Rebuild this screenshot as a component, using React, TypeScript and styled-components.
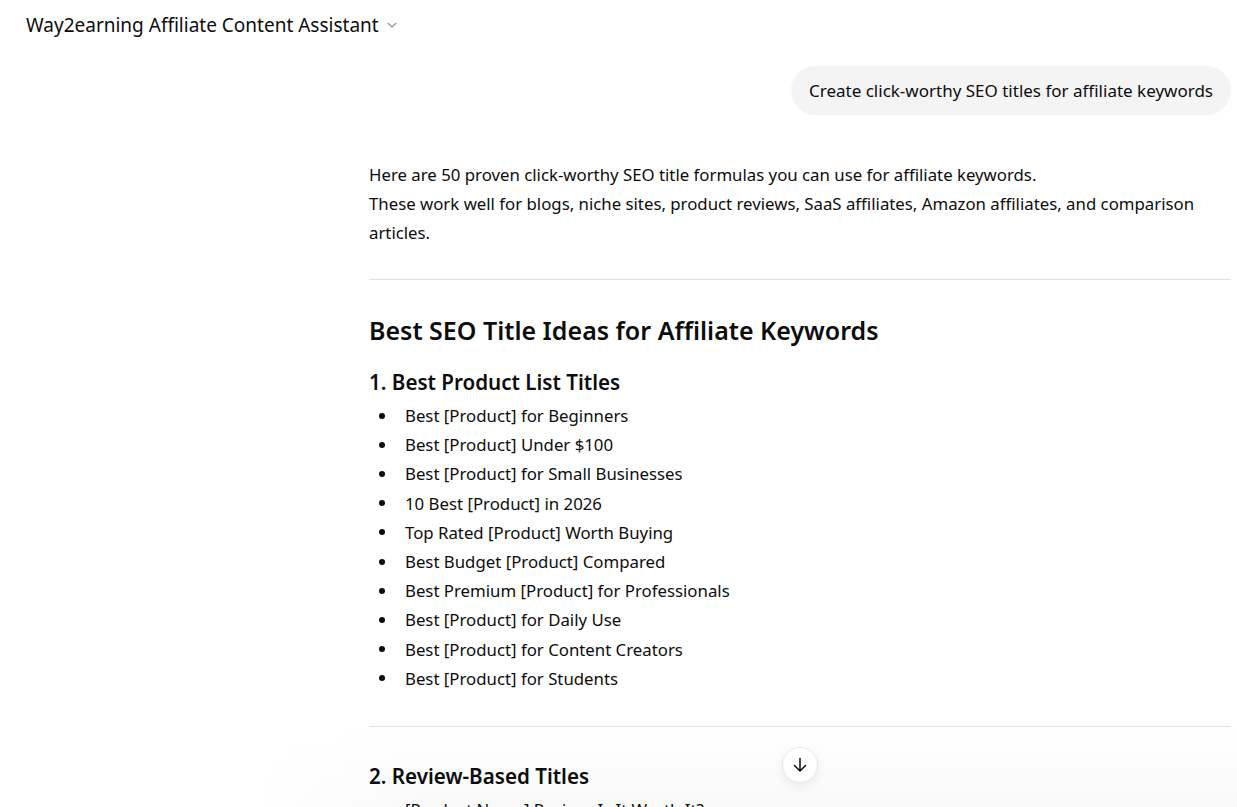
import styled, { createGlobalStyle } from 'styled-components';

const GlobalStyle = createGlobalStyle`
  html, body {
    margin: 0;
    padding: 0;
    background: #ffffff;
    overflow: hidden;
  }

  body {
    font-family: 'Noto Sans', 'Open Sans', sans-serif;
    color: #0d0d0d;
  }
`;

interface Section {
  title: string;
  items: string[];
}

const sections: Section[] = [
  {
    title: '1. Best Product List Titles',
    items: [
      'Best [Product] for Beginners',
      'Best [Product] Under $100',
      'Best [Product] for Small Businesses',
      '10 Best [Product] in 2026',
      'Top Rated [Product] Worth Buying',
      'Best Budget [Product] Compared',
      'Best Premium [Product] for Professionals',
      'Best [Product] for Daily Use',
      'Best [Product] for Content Creators',
      'Best [Product] for Students',
    ],
  },
  {
    title: '2. Review-Based Titles',
    items: ['[Product Name] Review: Is It Worth It?', '[Product Name] Review: Pros, Cons & Verdict'],
  },
];

const App = () => {
  return (
    <Page>
      <GlobalStyle />
      <Header>
        <AssistantName>Way2earning Affiliate Content Assistant</AssistantName>
        <svg width="14" height="14" viewBox="0 0 16 16" fill="none">
          <path d="M3.5 6L8 10.5L12.5 6" stroke="#8f8f8f" strokeWidth="1.3" strokeLinecap="round" strokeLinejoin="round" />
        </svg>
      </Header>

      <Thread>
        <UserRow>
          <UserBubble>Create click-worthy SEO titles for affiliate keywords</UserBubble>
        </UserRow>

        <Answer>
          <Paragraph>
            Here are 50 proven click-worthy SEO title formulas you can use for affiliate keywords.
            <br />
            These work well for blogs, niche sites, product reviews, SaaS affiliates, Amazon affiliates, and comparison
            articles.
          </Paragraph>

          <Divider />

          <MainHeading>Best SEO Title Ideas for Affiliate Keywords</MainHeading>

          {sections.map((section, i) => (
            <SectionBlock key={section.title}>
              {i > 0 && <Divider $gap={33} />}
              <SubHeading $first={i === 0}>{section.title}</SubHeading>
              <BulletList>
                {section.items.map((item) => (
                  <li key={item}>{item}</li>
                ))}
              </BulletList>
            </SectionBlock>
          ))}
        </Answer>
      </Thread>

      <BottomFade />
      <ScrollButton aria-label="Scroll to bottom">
        <svg width="20" height="20" viewBox="0 0 20 20" fill="none">
          <path d="M10 3.5V16M4.5 10.5L10 16L15.5 10.5" stroke="#0d0d0d" strokeWidth="1.5" strokeLinecap="round" strokeLinejoin="round" />
        </svg>
      </ScrollButton>
    </Page>
  );
};

const Page = styled.div`
  position: relative;
  width: 1237px;
  height: 807px;
  overflow: hidden;
  background: #ffffff;
`;

const Header = styled.div`
  display: flex;
  align-items: center;
  gap: 6px;
  height: 50px;
  padding-left: 26px;
`;

const AssistantName = styled.span`
  font-size: 19px;
  color: #0d0d0d;
`;

const Thread = styled.div`
  display: flex;
  flex-direction: column;
  padding: 16px 6px 0 369px;
`;

const UserRow = styled.div`
  display: flex;
  justify-content: flex-end;
`;

const UserBubble = styled.div`
  padding: 12px 18px;
  background: #f4f4f4;
  border-radius: 25px;
  font-size: 17px;
  line-height: 25px;
  color: #0d0d0d;
`;

const Answer = styled.div`
  margin-top: 45px;
`;

const Paragraph = styled.p`
  margin: 0;
  font-size: 16.8px;
  line-height: 29px;
`;

const Divider = styled.hr<{ $gap?: number }>`
  margin: ${({ $gap }) => $gap ?? 32}px 0 0;
  border: none;
  border-top: 1px solid #e0e0e0;
`;

const MainHeading = styled.h2`
  margin: 34px 0 0;
  font-size: 25px;
  line-height: 32px;
  font-weight: 600;
`;

const SectionBlock = styled.div``;

const SubHeading = styled.h3<{ $first: boolean }>`
  margin: ${({ $first }) => ($first ? '22px' : '35px')} 0 0;
  font-size: 20.6px;
  line-height: 28px;
  font-weight: 600;
`;

const BulletList = styled.ul`
  margin: 5px 0 0;
  padding-left: 10px;
  list-style: none;
  font-size: 16.8px;
  line-height: 29.2px;

  li {
    display: flex;
    align-items: center;
  }

  li::before {
    content: '';
    flex: none;
    width: 6px;
    height: 6px;
    margin-right: 20px;
    border-radius: 50%;
    background: #0d0d0d;
  }
`;

const BottomFade = styled.div`
  position: absolute;
  left: 0;
  right: 0;
  bottom: 0;
  height: 80px;
  background: linear-gradient(to bottom, rgba(255, 255, 255, 0), rgba(0, 0, 0, 0.022));
  -webkit-mask-image: linear-gradient(to right, transparent 20%, #000 35%);
  mask-image: linear-gradient(to right, transparent 20%, #000 35%);
  pointer-events: none;
`;

const ScrollButton = styled.button`
  position: absolute;
  left: 782px;
  top: 747px;
  width: 36px;
  height: 36px;
  display: flex;
  align-items: center;
  justify-content: center;
  padding: 0;
  border: 1px solid #e8e8e8;
  border-radius: 50%;
  background: #ffffff;
  box-shadow: 0 4px 10px rgba(0, 0, 0, 0.07);
  cursor: pointer;
`;

export default App;
